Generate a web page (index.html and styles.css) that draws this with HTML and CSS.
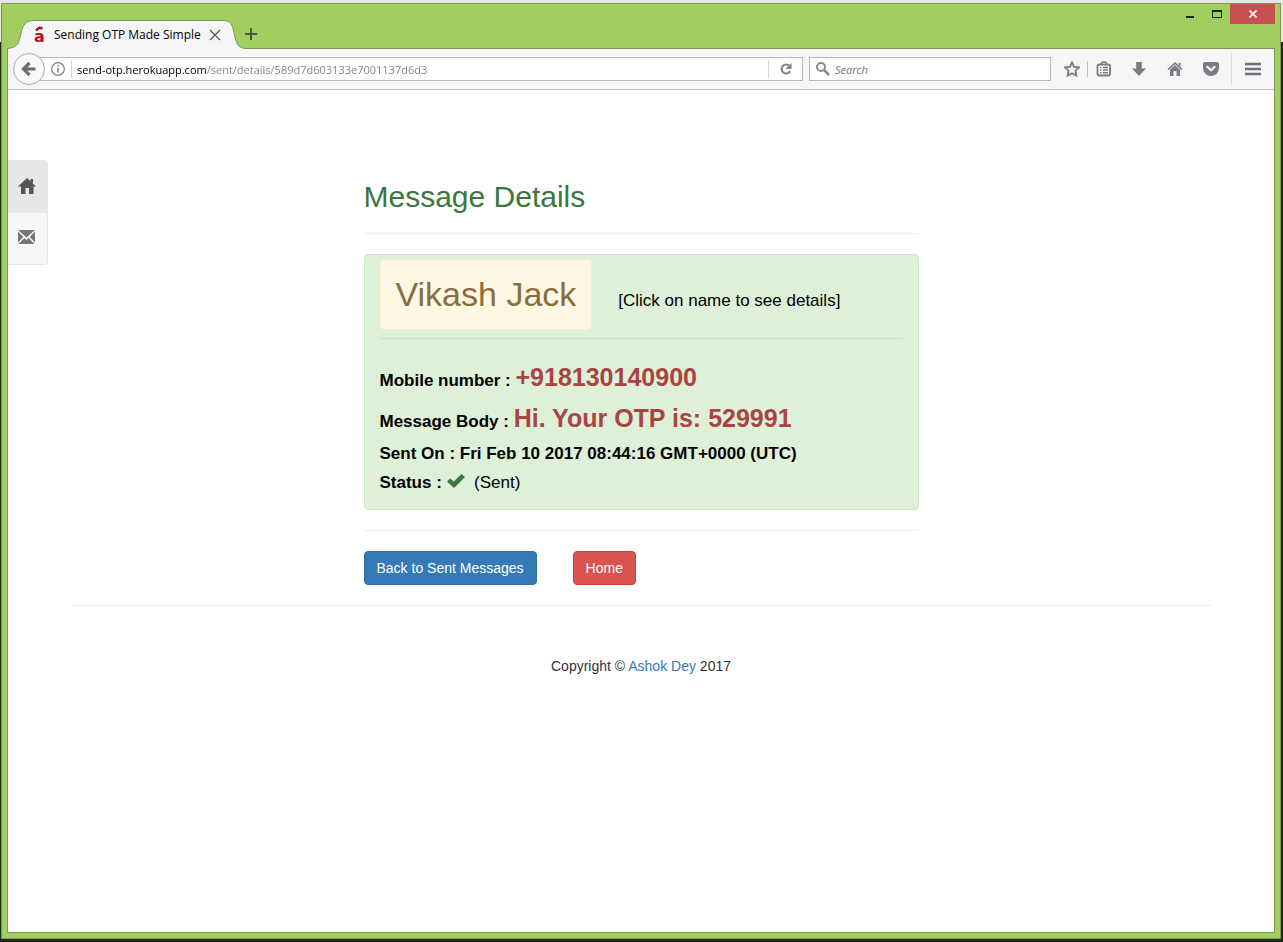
FILE: index.html
```html
<!DOCTYPE html>
<html lang="en">
<head>
<meta charset="utf-8">
<title>Sending OTP Made Simple</title>
<link rel="stylesheet" href="styles.css">
</head>
<body>
<div class="window">
  <header class="titlebar">
    <div class="tab">
      <svg class="tab-shape" viewBox="0 0 238 29" width="238" height="29" aria-hidden="true">
        <path d="M0 29V28.5C8 28 11.500 25 13 18C15 7 17 .5 27 .5H216C224 .5 225.500 5 227 13C229 23 231 28 238 28.500V29Z" fill="#f5f6f7"/>
        <path d="M0 28.500C8 28 11.500 25 13 18C15 7 17 .5 27 .5H216C224 .5 225.500 5 227 13C229 23 231 28 238 28.500" fill="none" stroke="#7f9659"/>
      </svg>
      <svg class="favicon" viewBox="0 0 16 26" width="16" height="26" role="img" aria-label="a">
        <text x="3" y="20" class="favicon-letter">a</text>
        <path d="M5 8.500L8.500 5.500L11.500 6.500" fill="none" stroke="#b5121b" stroke-width="2.400"/>
      </svg>
      <span class="tab-title">Sending OTP Made Simple</span>
      <button class="tab-close" aria-label="Close tab"><svg viewBox="0 0 12 12" width="12" height="12"><path d="M1 1L11 11M11 1L1 11" stroke="#555" stroke-width="1.300"/></svg></button>
    </div>
    <button class="new-tab" aria-label="New tab"><svg viewBox="0 0 12 12" width="12" height="12"><path d="M6 0V12M0 6H12" stroke="#4c5540" stroke-width="2"/></svg></button>
    <div class="window-controls">
      <button class="control" aria-label="Minimize"><svg viewBox="0 0 10 10" width="10" height="10"><path d="M1 8H9" stroke="#1c2410" stroke-width="2"/></svg></button>
      <button class="control" aria-label="Maximize"><svg viewBox="0 0 10 10" width="10" height="10"><path d="M.5 1V8.500H9.500V1" fill="none" stroke="#1c2410"/><path d="M0 2H10" stroke="#1c2410" stroke-width="2"/></svg></button>
      <button class="control control-close" aria-label="Close"><svg viewBox="0 0 8 8" width="8" height="8"><path d="M.5 .5L7.500 7.500M7.500 .5L.5 7.500" stroke="#fff" stroke-width="1.600"/></svg></button>
    </div>
  </header>

  <div class="client">
    <nav class="toolbar" aria-label="Browser">
      <button class="back" aria-label="Back"><svg viewBox="0 0 16 16" width="16" height="16"><path d="M8.500 2L2.500 8L8.500 14M3 8H14.500" fill="none" stroke="#6b6c6d" stroke-width="3.200"/></svg></button>
      <div class="urlbar">
        <svg class="info" viewBox="0 0 14 14" width="14" height="14" aria-hidden="true"><circle cx="7" cy="7" r="6.300" fill="none" stroke="#808080" stroke-width="1.200"/><path d="M7 6V10.500M7 3.200V4.800" stroke="#808080" stroke-width="1.600"/></svg>
        <input class="url" type="text" aria-label="Address" value="send-otp.herokuapp.com/sent/details/589d7d603133e7001137d6d3">
        <button class="reload" aria-label="Reload"><svg viewBox="0 0 14 14" width="14" height="14"><path d="M10.500 4A4.500 4.500 0 1 0 11.200 9" fill="none" stroke="#808080" stroke-width="2"/><path d="M12.500 1V7H6.500Z" fill="#808080"/></svg></button>
      </div>
      <div class="search">
        <svg viewBox="0 0 14 14" width="14" height="14" aria-hidden="true"><circle cx="5" cy="5" r="4" fill="none" stroke="#8c8c8c" stroke-width="2"/><path d="M8 8L13 13" stroke="#8c8c8c" stroke-width="2.600"/></svg>
        <input class="search-input" type="search" aria-label="Search" placeholder="Search">
      </div>
      <div class="tools">
        <button class="tool tool-star" aria-label="Bookmark"><svg viewBox="0 0 16 16" width="16" height="16"><path d="M8 1.300L10.100 5.800L15 6.400L11.400 9.700L12.400 14.600L8 12.200L3.600 14.600L4.600 9.700L1 6.400L5.900 5.800Z" fill="none" stroke="#7a7c7f" stroke-width="1.800"/></svg></button>
        <button class="tool tool-list" aria-label="Bookmarks"><svg viewBox="0 0 16 16" width="16" height="16"><path d="M5 3L6.500 1H9.500L11 3" fill="none" stroke="#7a7c7f" stroke-width="1.600"/><rect x="1.500" y="3.500" width="12.500" height="11" rx="1.500" fill="none" stroke="#7a7c7f" stroke-width="1.800"/><path d="M4 6.500H5.500M7 6.500H12M4 9H5.500M7 9H12M4 11.700H5.500M7 11.700H12" stroke="#7a7c7f" stroke-width="1.400"/></svg></button>
        <button class="tool" aria-label="Downloads"><svg viewBox="0 0 16 16" width="16" height="16"><path d="M5.200 1H10.800V7.500H15L8 15L1 7.500H5.200Z" fill="#7a7c7f"/></svg></button>
        <button class="tool" aria-label="Home page"><svg viewBox="0 0 16 16" width="16" height="16"><path d="M1 8.700L8 2L15 8.700" fill="none" stroke="#7a7c7f" stroke-width="1.600"/><path d="M11.500 2H13.500V6L11.500 4ZM3 8.700L8 4L13 8.700V15H9.500V10H6.500V15H3Z" fill="#7a7c7f"/></svg></button>
        <button class="tool" aria-label="Pocket"><svg viewBox="0 0 16 16" width="16" height="16"><path d="M2 1H14Q16 1 16 3V7A8 8 0 0 1 0 7V3Q0 1 2 1Z" fill="#7a7c7f"/><path d="M4.300 5.800L8 9.300L11.700 5.800" fill="none" stroke="#f5f6f7" stroke-width="2.200" stroke-linecap="round"/></svg></button>
        <button class="tool tool-menu" aria-label="Menu"><svg viewBox="0 0 16 16" width="16" height="16"><path d="M0 3H16M0 8H16M0 13H16" stroke="#6f7174" stroke-width="2.600"/></svg></button>
      </div>
    </nav>

    <div class="page">
      <nav class="side-nav" aria-label="Site">
        <a class="side-link active" href="#" aria-label="Home"><svg viewBox="0 0 18 18" width="18" height="18"><path d="M9 1L18 9.500H15.500V17H11V11H7.500V17H3V9.500H0L9 1ZM12.500 2H15V6.500L12.500 4.200Z" fill="#555"/></svg></a>
        <a class="side-link" href="#" aria-label="Messages"><svg viewBox="0 0 18 18" width="18" height="18"><path d="M0 2H17L8.500 9.500ZM0 3.500L5.300 9L0 14.500ZM17 3.500V14.500L11.700 9ZM6.300 10L8.500 12L10.700 10L16.500 16H.5Z" fill="#777"/></svg></a>
      </nav>
      <main class="container">
        <section class="details">
          <h2 class="heading">Message Details</h2>
          <hr class="rule">
          <div class="card">
            <div class="who">
              <a class="name" href="#">Vikash Jack</a>
              <span class="hint">[Click on name to see details]</span>
            </div>
            <hr class="card-rule">
            <p class="line strong">Mobile number : <span class="value">+918130140900</span></p>
            <p class="line strong">Message Body : <span class="value">Hi. Your OTP is: 529991</span></p>
            <p class="line strong">Sent On : Fri Feb 10 2017 08:44:16 GMT+0000 (UTC)</p>
            <p class="line"><strong>Status :</strong> <svg class="check" viewBox="0 0 18 14" width="18" height="14" role="img" aria-label="Sent"><path d="M0 7.500L3 4.500L6.800 7.500L14.500 0L18 3L7 14Z" fill="#3c763d"/></svg> &nbsp;(Sent)</p>
          </div>
          <hr class="rule">
          <div class="actions">
            <a class="btn btn-primary" href="#">Back to Sent Messages</a>
            <a class="btn btn-danger" href="#">Home</a>
          </div>
        </section>
        <hr class="rule">
        <footer class="footer">Copyright © <a class="link" href="#">Ashok Dey</a> 2017</footer>
      </main>
    </div>
  </div>
</div>
</body>
</html>
```
FILE: styles.css
```css
* { box-sizing: border-box; }

body {
  margin: 0;
  min-height: 100vh;
  display: flex;
  padding: 3px 2px 3px 1px;
  background: linear-gradient(#e6e6e4 42px, #1f2a20 42px);
  font-family: "Liberation Sans", Arial, sans-serif;
  font-size: 14px;
  line-height: 20px;
  color: #333;
}

button { border: 0; padding: 0; background: none; font: inherit; }
button, .tab, .search, .urlbar { display: flex; align-items: center; }
button { justify-content: center; }
svg { flex: none; }

.window {
  flex: 1;
  min-width: 0;
  display: flex;
  flex-direction: column;
  padding: 0 5px 5px;
  border: 1px solid #7f9659;
  background: #a1cf5f;
}

.titlebar { display: flex; align-items: flex-end; height: 44px; }

.tab {
  position: relative;
  z-index: 1;
  width: 238px;
  height: 29px;
  margin-bottom: -1px;
  padding: 0 18px 0 24px;
  gap: 7px;
  font-family: "Open Sans", "Noto Sans", sans-serif;
  font-size: 12px;
  color: #000;
}
.tab-shape { position: absolute; inset: 0; z-index: -1; }
.favicon-letter {
  font: bold 16px "DejaVu Sans", sans-serif;
  fill: #b5121b;
}
.tab-title { flex: 1; min-width: 0; white-space: nowrap; }
.tab-close { width: 24px; height: 24px; }
.new-tab { width: 12px; height: 28px; }

.window-controls { display: flex; align-self: flex-start; margin-left: auto; }
.control { width: 27px; height: 20px; }
.control-close { width: 45px; background: #c75050; }

.client {
  flex: 1;
  display: flex;
  flex-direction: column;
  border: 1px solid #7f9659;
  background: #fff;
}

.toolbar {
  display: flex;
  align-items: center;
  height: 41px;
  padding-left: 5px;
  background: #f5f6f7;
  border-bottom: 1px solid #c1c1c1;
  font-family: "Open Sans", "Noto Sans", sans-serif;
  font-size: 11px;
}
.back {
  z-index: 1;
  width: 32px;
  height: 32px;
  border: 1px solid #ababab;
  border-radius: 50%;
  background: #fafafa;
}
.urlbar {
  flex: 1;
  height: 24px;
  margin-left: -9px;
  padding-left: 14px;
  border: 1px solid #b8b8b8;
  background: #fff;
}
.url, .search-input {
  flex: 1;
  min-width: 0;
  height: 18px;
  border: 0;
  padding: 1px 0 0;
  outline: 0;
  background: none;
  font: inherit;
}
.url {
  margin-left: 6px;
  padding-left: 5px;
  border-left: 1px solid #d4d4d4;
  color: transparent;
  background: linear-gradient(90deg, #000 134px, #808080 134px);
  background-clip: text;
}
.reload { width: 34px; height: 18px; border-left: 1px solid #d4d4d4; }
.search {
  width: 242px;
  height: 24px;
  margin-left: 6px;
  padding-left: 6px;
  gap: 5px;
  border: 1px solid #b8b8b8;
  background: #fff;
}
.search-input::placeholder { color: #777; font-style: italic; }

.tools { display: flex; align-items: center; margin-left: 6px; }
.tool { width: 36px; height: 16px; }
.tool-star { width: 31px; border-right: 1px solid #c1c1c1; }
.tool-list { width: 31px; margin-right: 2px; }
.tool-menu { width: 43px; height: 32px; margin-left: 2px; border-left: 1px solid #dcdcdc; }

.page { flex: 1; position: relative; padding: 90px 16px 0; }

.side-nav {
  position: absolute;
  left: 0;
  top: 70px;
  width: 40px;
  border: 1px solid #e7e7e7;
  border-left: 0;
  border-radius: 0 4px 4px 0;
  background: #f8f8f8;
  overflow: hidden;
}
.side-link { display: flex; padding: 15px 10px; height: 51px; }
.side-link.active { padding-top: 16px; height: 52px; background: #e7e7e7; }

.container { max-width: 1140px; margin: 0 auto; }
.details { max-width: 555px; margin: 0 auto; }

.heading {
  margin: 0;
  font-size: 30px;
  line-height: 33px;
  font-weight: 400;
  color: #3c763d;
}
.rule, .card-rule { height: 1px; margin: 20px 0; border: 0; background: #eee; }

.card {
  padding: 4px 15px 12px;
  border: 1px solid #d0e6c4;
  border-radius: 4px;
  background: #dff0d8;
  color: #000;
  font-size: 17px;
}
.card-rule { margin: 8px 0 18px; background: #c9e2b8; }
.who { display: flex; align-items: center; gap: 26px; }
.name {
  padding: 15px;
  border: 1px solid #faebcc;
  border-radius: 4px;
  background: #fcf8e3;
  color: #8a6d3b;
  font-size: 34px;
  line-height: 39px;
  text-decoration: none;
}
.hint { padding-top: 12px; }
.line { margin: 0; line-height: 29px; }
.strong { font-weight: 700; }
.value { font-size: 25px; line-height: 41px; color: #a94442; }

.actions { display: flex; gap: 36px; }
.btn {
  padding: 6px 12px;
  border: 1px solid;
  border-radius: 4px;
  color: #fff;
  text-decoration: none;
}
.btn-primary { background: #337ab7; border-color: #2e6da4; }
.btn-danger { background: #d9534f; border-color: #d43f3a; }

.footer { padding-top: 30px; text-align: center; }
.link { color: #337ab7; text-decoration: none; }
```
